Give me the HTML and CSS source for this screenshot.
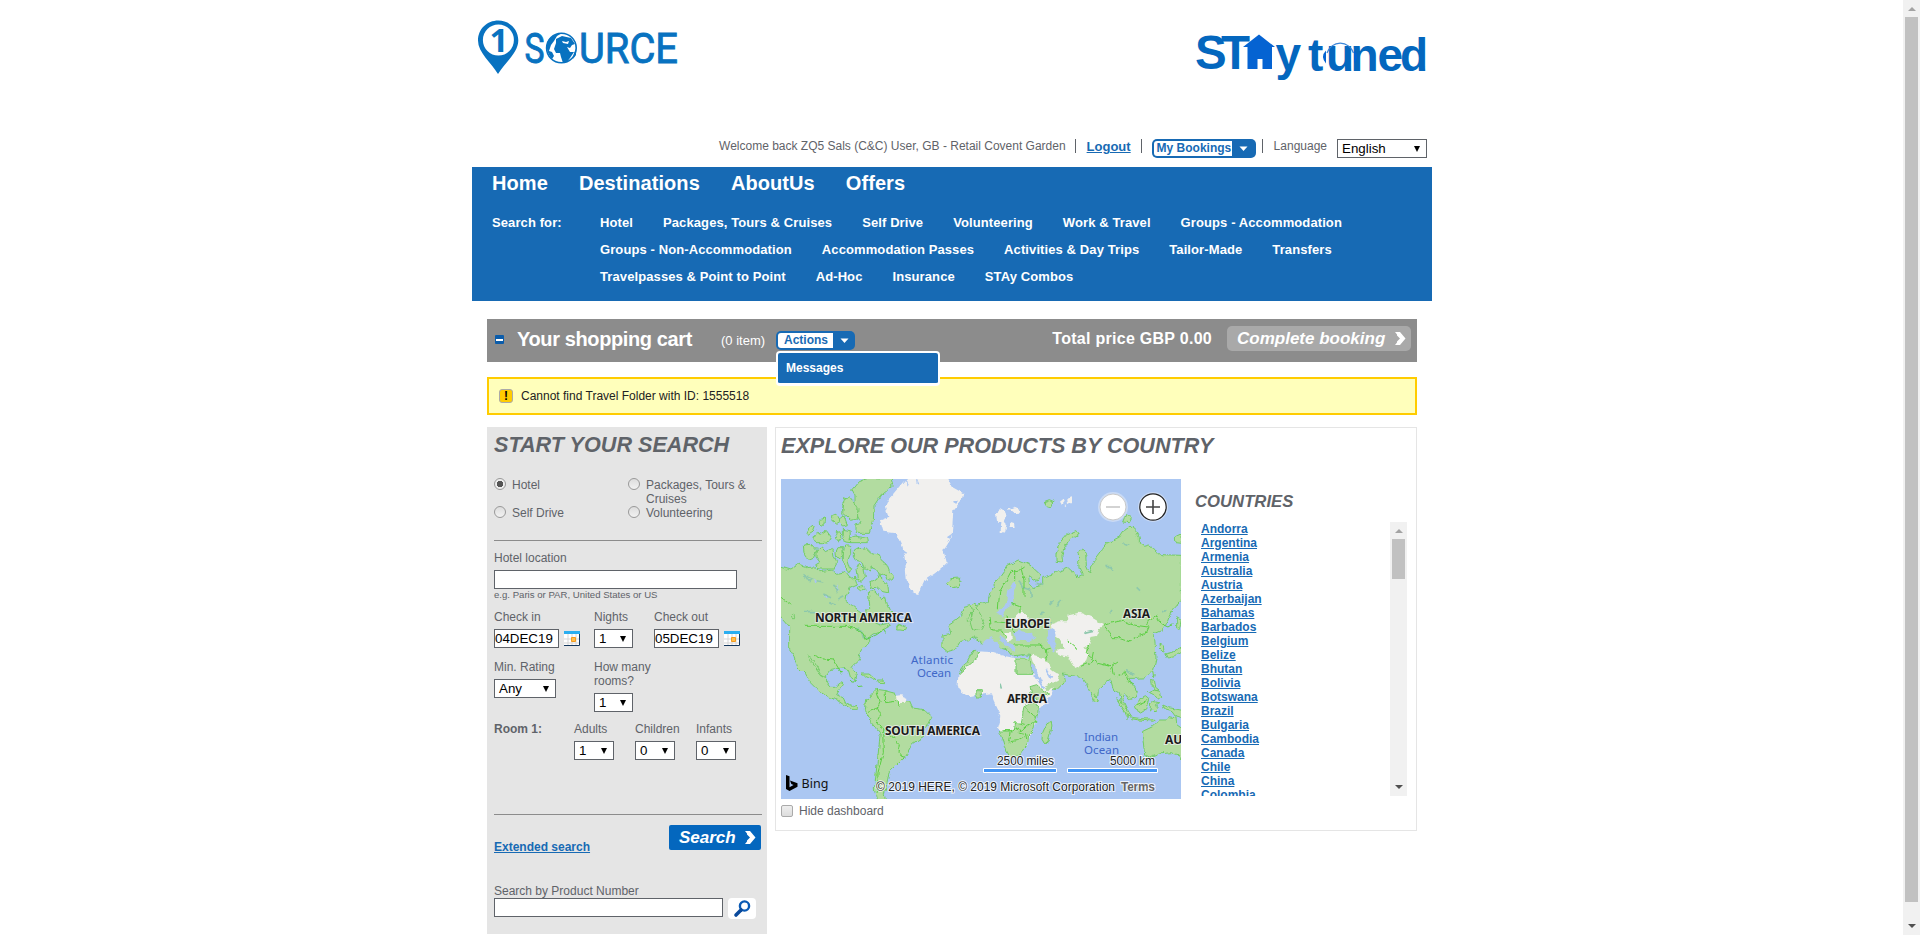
FILE: index.html
```html
<!DOCTYPE html>
<html lang="en">
<head>
<meta charset="utf-8">
<title>1Source</title>
<link rel="stylesheet" href="styles.css">
</head>
<body>
<main class="page">
  <header class="logos">
    <svg class="logo-source" width="202" height="58" viewBox="0 0 202 58">
      <path d="M21.300 1.500c11 0 20 8.500 20 20 0 12-13 22-20.300 33.500C14 43.500 1 33.500 1 21.500 1 10 10 1.500 21.300 1.500z" fill="#0872c0"/>
      <circle cx="21.400" cy="21" r="15.500" fill="#fff"/>
      <text class="pin-digit" x="12.500" y="33">1</text>
      <text class="source-text" x="47.500" y="44" textLength="20" lengthAdjust="spacingAndGlyphs">S</text>
      <text class="source-text" x="102" y="44" textLength="99" lengthAdjust="spacingAndGlyphs">URCE</text>
      <circle cx="84.400" cy="29" r="14.800" fill="#fff" stroke="#0872c0" stroke-width="1.600"/>
      <path d="M79 20l6-3 9 2 4 6-3 1-2 3-3-1 3 5 4 0-4 6-3 4-4 1-2-6-1-4-4 0-2-4 2-6zM72 20l7-5 6-1-5 3-3 5-3 4-2 6 3 1 2 4-2 3c-5-6-7-13-3-20zM97 34l2-4v6l-3 4z" fill="#0872c0"/>
      <path d="M85 22l4 1 3-1-1 3-5-1z" fill="#fff"/>
    </svg>
    <svg class="logo-stay" width="232" height="52" viewBox="0 0 232 52">
      <text class="stay-text st" x="-2 24" y="35.500">ST</text>
      <path d="M46 14L62 1.500l16 12.500h-3v22h-9.500v-10h-5v10H50.500V14z" fill="#0563d2"/>
      <text class="stay-text" x="78.500" y="36.500">y</text>
      <text class="stay-text" x="111 129 153.500 180.500 203" y="38">tuned</text>
      <path d="M130 20a14 14.500 0 0 1 26.500 0" fill="none" stroke="#3c86d8" stroke-width="1.200"/>
      <path d="M129 17.500q-6 6 0 13zM157 17.500q6 6 0 13z" fill="#0563d2"/>
    </svg>
  </header>

  <div class="user-bar">
    <span class="welcome">Welcome back ZQ5 Sals (C&amp;C) User, GB - Retail Covent Garden</span>
    <i class="sep"></i>
    <a class="logout">Logout</a>
    <i class="sep"></i>
    <span class="menu-btn my-bookings"><b>My Bookings</b><svg width="10" height="6" viewBox="0 0 10 6"><path d="M.5.5h8L4.500 5z"/></svg></span>
    <i class="sep"></i>
    <span class="language">Language</span>
    <span class="select lang-select">English<i></i></span>
  </div>

  <nav class="nav">
    <div class="nav-main"><a>Home</a><a>Destinations</a><a>AboutUs</a><a>Offers</a></div>
    <div class="nav-search">
      <span class="search-for">Search for:</span>
      <div class="products">
        <div><a>Hotel</a><a>Packages, Tours &amp; Cruises</a><a>Self Drive</a><a>Volunteering</a><a>Work &amp; Travel</a><a>Groups - Accommodation</a></div>
        <div><a>Groups - Non-Accommodation</a><a>Accommodation Passes</a><a>Activities &amp; Day Trips</a><a>Tailor-Made</a><a>Transfers</a></div>
        <div><a>Travelpasses &amp; Point to Point</a><a>Ad-Hoc</a><a>Insurance</a><a>STAy Combos</a></div>
      </div>
    </div>
  </nav>

  <div class="content">
    <section class="cart">
      <i class="collapse"></i>
      <h2>Your shopping cart</h2>
      <span class="items">(0 item)</span>
      <div class="actions">
        <span class="menu-btn"><b>Actions</b><svg width="10" height="6" viewBox="0 0 10 6"><path d="M.5.5h8L4.500 5z"/></svg></span>
        <div class="dropdown">Messages</div>
      </div>
      <span class="total">Total price GBP 0.00</span>
      <span class="go-btn complete">Complete booking<svg width="12" height="15" viewBox="0 0 12 15"><path d="M1 1h5l5.500 6.500L6 14H1l2-2.500v-1L6 7.500 3 4.500v-1z"/></svg></span>
    </section>

    <section class="warning"><b>!</b><span>Cannot find Travel Folder with ID: 1555518</span></section>

    <div class="columns">
      <form class="search">
        <h1>START YOUR SEARCH</h1>
        <div class="radios">
          <label><i class="radio on"></i><span>Hotel</span></label>
          <label><i class="radio"></i><span>Packages, Tours &amp; Cruises</span></label>
          <label><i class="radio"></i><span>Self Drive</span></label>
          <label><i class="radio"></i><span>Volunteering</span></label>
        </div>
        <div class="location">
          <label>Hotel location</label>
          <div class="field wide"></div>
          <small>e.g. Paris or PAR, United States or US</small>
        </div>
        <div class="grid dates">
          <div><label>Check in</label><div class="date"><span class="field">04DEC19</span><svg width="16" height="15" viewBox="0 0 16 15"><path d="M0 0h16v15H0z" fill="#fff"/><path d="M0 8h16M0 12h16M4 3v12M8 3v12M12 3v12" stroke="#d5d5d5"/><path d="M0 0h16v3H0z" fill="#2aaef0"/><path d="M15.500 3v11.500H0" fill="none" stroke="#12365c"/><path d="M7.500 6.500h4v4h-4z" fill="#ffc04d" stroke="#f59a1c"/></svg></div></div>
          <div><label>Nights</label><span class="select s39">1<i></i></span></div>
          <div><label>Check out</label><div class="date"><span class="field">05DEC19</span><svg width="16" height="15" viewBox="0 0 16 15"><path d="M0 0h16v15H0z" fill="#fff"/><path d="M0 8h16M0 12h16M4 3v12M8 3v12M12 3v12" stroke="#d5d5d5"/><path d="M0 0h16v3H0z" fill="#2aaef0"/><path d="M15.500 3v11.500H0" fill="none" stroke="#12365c"/><path d="M7.500 6.500h4v4h-4z" fill="#ffc04d" stroke="#f59a1c"/></svg></div></div>
        </div>
        <div class="grid rating">
          <div><label>Min. Rating</label><span class="select s62">Any<i></i></span></div>
          <div><label>How many rooms?</label><span class="select s39">1<i></i></span></div>
        </div>
        <div class="rooms">
          <b>Room 1:</b>
          <div><label>Adults</label><span class="select">1<i></i></span></div>
          <div><label>Children</label><span class="select">0<i></i></span></div>
          <div><label>Infants</label><span class="select">0<i></i></span></div>
        </div>
        <div class="submit">
          <a>Extended search</a>
          <span class="go-btn">Search<svg width="12" height="15" viewBox="0 0 12 15"><path d="M1 1h5l5.500 6.500L6 14H1l2-2.500v-1L6 7.500 3 4.500v-1z"/></svg></span>
        </div>
        <div class="by-number">
          <label>Search by Product Number</label>
          <div><span class="field"></span><span class="lens"><svg width="28" height="21" viewBox="0 0 28 21"><circle cx="16.500" cy="8" r="4.600" fill="#fff" stroke="#0a5ab4" stroke-width="2.400"/><path d="M13 12l-5 5" stroke="#0a4a9c" stroke-width="3.600" stroke-linecap="round"/></svg></span></div>
        </div>
      </form>

      <section class="explore">
        <h1>EXPLORE OUR PRODUCTS BY COUNTRY</h1>
        <div class="explore-body">
          <div class="map-col">
            <svg class="map" width="400" height="320" viewBox="0 0 400 320">
              <defs>
                <filter id="coast" x="0" y="0" width="100%" height="100%"><feTurbulence type="fractalNoise" baseFrequency=".14" numOctaves="3" seed="4"/><feDisplacementMap in="SourceGraphic" scale="5" xChannelSelector="R" yChannelSelector="G"/></filter>
              </defs>
              <path d="M0 0h400v320H0z" fill="#abc7f2"/>
              <g filter="url(#coast)">
              <path d="M-20-20h440v360H-20z" fill="#abc7f2"/>
              <!-- Americas and Greenland -->
              <g transform="translate(-11 -9) scale(.33333)">
                <g class="land">
                  <path d="M20 288l40 12 25-17 25 7 20-2 20 17 35-5 15 10 25-5 15 20 15-3 7 23-22 10-10 20-2 20 20 12 18 14 12 8 5 22 8-10-4-18 12-14-4-45 20-2 18 24 10-8 6 22 10 22 8 8-8 12-22 14-20 6 14 6 18-4 6-4 12 4-22 12-18 12-18 4-10 8 0 18-25 24-10 30-18 17 14 28-4 16-14-12-6-21-20-6-32 4-14 18 0 22 10 14 18 0 18-14 4 6-12 16-8 14 20 10 8 18 20 8 10-4 4 12-18 0-22-14-22-15-25-7-30-20-25-25-14-24-24-24-10-30-13-22V470l-30-34-10-22-37-30z"/>
                  <path d="M110 555l14 8 18 28 12 22 10 8-14-8-16-22-14-18z"/>
                  <path d="M290 688l28-30 27 4 30 8 16 24 28 2 8 18 38 5 20 20-18 36-6 24-34 22-20 36-15 14-20 20-15 14-6 36-8 30 4 26h-26l-8-40 10-90 8-80-27-32-18-34z"/>
                  <path d="M245 60l20-25 35-12 65 2 6 20-36 30-23 35-2 40-12 40h-43l0-25 20-5-15-30-22-10-20 0 2-40 20 8 0 20 15 0 0-30z"/>
                  <path d="M218 130l4-40 16-10 14 16 12 20-2 30-20 5z"/>
                  <path d="M108 190l12-22 16 2-6 16-16 10zM150 148l14-4-2 18-10 4zM185 136l12-4 14 22-10 6-16-12zM208 150l14-12 10 26-12 4zM132 205l8-18 14 6 16-10 12 16-6 18-18 4-16 0zM196 206l6-22 12 4 2 22-12 6zM220 178l20 4 2 36-16-2-6-20zM240 206l12-8 38 6 2 14-50 0zM100 225l24-2 16 18-10 24-14 6-14-20zM138 245l16-14 12 14 22-10 4 22 8 18-6 22-26 0-22 0-10-12 14-8-12-16zM198 245l6-12 14 0 2 20-10 16-10-8zM220 250l4-22 18 0 0 22-8 20 8 26-6 14-16-36zM250 260l0-20 14-8 14 6 14-4 14 14 22 6 8 18 14 12 8 20 12 14-6 16-14-6-4-16-18 6-8-22-20-8 2 18-18-10-10-22-18-4z"/>
                  <path d="M258 300l10-20 14 14 4 26-12 14-12-8zM300 340l18-10 6-14 14 12 16 20 2 20-20-4-10-10-20 2zM262 352l16-6 10 10-14 6zM380 480l2-18 8 2 18 8-4 10-14-2zM530 338l12-12 26-2 8 14-12 14-16 4zM270 612l30 0 18 14-10 2-20-10-16 0zM322 630l20 0 2 8-18-1zM64 434l8-2 2 14-8 0z"/>
                </g>
                <g class="bare">
                  <path d="M350 95l25-30 25-30 20-12h110l15 27 35 20-5 20-25 30-5 80-25 40 10 40-35 30-30 20-20 45-20-5-15-40-5-60-10-50-15-30-40-5-10-35 25-10-10-30z"/>
                  <path d="M375 678l18-2 20 8-4 14-30 2z"/>
                </g>
                <path class="water" d="M130 320l12 16-6 2zM160 372l18 6-14 4zM200 340l12 20-8 2zM350 55l20 20-4 4zM410 20l6 26-4 0zM440 20l8 20-5 0zM548 190l-18 12 10 4zM545 225l-22 8 14 6zM395 240l14 8-10 4zM565 90l-20 8 10 6z"/>
                <path class="lakes" d="M105 316l22 8-10 10zM140 335l20 4M160 372l20 8M190 345l16 12-8 14M205 390l18-10M180 398l14 6M210 425l8 18M255 475l22 6 6 22 16 4M105 425h30"/>
                <path class="border" d="M105 469h125l30 8 22 10 6 22 34-16 20-16 6 14M33 385l30 22M135 556l20 10 35 4 25 40M237 632l12 8 14-12M262 650l16-2M318 658l12 36-8 20-28 10M345 662l2 36 30-4 16 12M322 714l10 20-12 20 18 24 30 20 20 24-4 22 18 20M338 778l2 70-16 60-2 60M385 854l22 10"/>
              </g>
              <!-- Europe, Asia, Africa and Australia -->
              <g transform="translate(199 -9) scale(.33333)">
                <g class="land">
                  <path d="M25 395l5-30 30-45 25-35 30-15 35 15 32 30-8 18-28-16 2 26 12 10 28-8 0-22 42-16 35-16 20 18 10 14 12-6-10-26-2-38 10-16 12 10 2 40 10 22 16-40 22-30 14-20 38-18 17-25 14-8 18 16 10 18 0 18 16 12 14-4 22 12 14 14 60 2v135l-28 32-10 30-20 26-24 10 4 38 2 40-8 34-22 22-32 2-20 0 14 22 12 18-6 16-18 8-12-18-8 16 18 40-2 22-18-46-8-36-16-6-10-34-12 8-22 26-4 34-14-2-20-50-14-20-28-6-28-5 6 18-18 22-44 16-24-42-14-42-14-14 10-14-26-2-30 4-14-18-28-8-14 12-10 18-16-24-16-28-20-12-16 12-22 6-14 22-24 6-16-12 0-34 24-4-6-26 18-14 20-16 10-26z"/>
                  <path d="M-22 480l-8-28 8-22-4-20 10-14 6 18 14 24 8 22-8 18-24 6zM-38 442l12-14 2 20-14 6z"/>
                  <path d="M228 250l10-30 22-26 32-14 4 12-30 20-14 24-6 20 2 20-20-2zM192 95l16-6 14 6-10 16-14-4zM428 156l10-24 16 14-6 12zM586 200l20-10v30l-18-2z"/>
                  <path d="M188 788l12-26 14-8 2 16-12 44-10 8-8-14zM344 672l8 4-4 8zM410 686l16 10 20 30 10 14-14-6-18-26zM455 742l30 4 40 2-2 6-46-4-22-4zM466 706l10-14 20-12 10 8-8 28-16 10-14-8zM512 700l8-6 16 4-10 6 8 8-6 14-10-10-8 8zM515 630l8 0 4 22 10 8-10 2-10-12zM505 668l16-8 20 4 4 16-12 8-10-14zM548 705l20 8 38 8v24l-20-6-10-14-22-6zM540 520l10 4 2 24-10-8zM556 552l30-8 20-12v14l-22 14-22 4zM590 440l14 8-6 30-8-4zM518 600l6 8-4 12z"/>
                  <path d="M488 798l0-14 30-14 20-20 22 0 10-10 18 4 2 20 14 10 10-20 20 30v90l-26 0-14-20-20-6-36 4-30 12-14-8z"/>
                </g>
                <g class="bare">
                  <path d="M-67 645l2-30 25-35 30-35 40-8 30 18 46 10 40-2 12 27 20 40 22 34 22-12-12 32-36 36-6 48-18 28-6 26-24 27-32 3-20-43-14-35 10-34-22-46-10-24-28 4-36 8-32-22z"/>
                  <path d="M155 556l40 10 20 36 22 14-4 16-42 20-20-44z"/>
                  <path d="M212 462l24-8 28 0 2-18 34-8 34 14 38 22-14 10-10 24-22 4 10 18-24 14 12 20-8 24-30 16-20-34-30-6-6-14 26-8-16-20-22-14z"/>
                  <path d="M110 434l16-14 10 14 16 20-14 18-34-6zM48 130l16-14 10 8 6 12 -6 16 6 14-6 22-12-4 2-28-12 0zM84 118l20-8 14 6-4 12-16 2zM90 158l12 4 2 12-12 0zM240 92l10-8 4 8-8 10zM262 86l14-4 0 14-12 6zM254 104l8 0-6 8zM76 488l16-2 4 24-10 4-10-12z"/>
                </g>
                <g class="land">
                  <path d="M108 567h42l8 46h-50zM-65 612l24-34 20-36 16-2 0 22-22 16-20 18zM-12 662l16 0v22l-16 0zM150 650l20-6 16 14 20 14-30 20-20-10zM132 710l24-10 20 4-4 34-6 20-4 20-16 14-2 24-24 38-32 4-16-30-14-45h40l6-24 20 0z"/>
                </g>
                <path class="water" d="M50 430l20 10 12-26 18-12-2-26 10-28 0-12-10 2-14 26-6 34-8 16zM100 488l18-12 10 8 24 4 14 18-12 8-48-2zM205 482l14-8 8 24-6 18 10 22-10 8-14-26zM60 494l16 14 14 14 14 12-4 10-20-16-22-18zM10 518l24-20 18 22 24 32-40-6-50-2zM196 596l8 4 16 20-8 4zM155 580l10 12 28 60-8 0-30-50z"/>
                <path class="lakes" d="M430 218l18 8M376 290l16 0 10 12M470 352l10 10M316 490l26-6M170 340l20 6M120 335l6 16 26 10 2 22M180 430l14-4M212 402l10-10M230 410l12-20M210 440v20M390 430l6-10M60 640l4 16M548 426l14-6M440 600l20 16"/>
                <path class="border" d="M55 415l4-50 22-38 14-26 16 4 20-14M104 300l0 32M122 290l10 40 0 50M30 440l4 40 34 0 12 22M44 455l42 4 18 30M80 440l16 20M90 400l30 10 0 20M370 467l22-8 38-8 30 14 44 6-10 22-20 6-24 14-30-10-24 0-10-16zM500 465l4-14 24-14 14 24 22 10 16-10M330 520l-12 30 36 30 40 10 20-14M300 590l34-14 6-30M398 590l6 30M416 620l18-10 6 20 22 12M430 600l14 20M100 525l80 0 16 14 16-4M196 540l6 34M260 510l30 26M70 782l20 0 16-8M90 786l-4 30 26-4 24-12M116 786l20 4 4 20M106 774l20 8 16-14 30-12M134 712l36 32M100 758l34 8M128 696l30-16M370 580l20 8 4 16M470 704l30-12"/>
              </g>
              </g>
              <g class="continent"><text x="34" y="143" textLength="97">NORTH AMERICA</text><text x="224" y="149" textLength="45">EUROPE</text><text x="342" y="139" textLength="27">ASIA</text><text x="104" y="256" textLength="95">SOUTH AMERICA</text><text x="226" y="224" textLength="40">AFRICA</text><text x="384" y="265">AU</text></g>
              <g class="ocean"><text x="130" y="185" textLength="42">Atlantic</text><text x="136" y="198" textLength="34">Ocean</text><text x="303" y="262" textLength="34">Indian</text><text x="303" y="275" textLength="35">Ocean</text></g>
              <g class="legend"><text x="216" y="286" textLength="57">2500 miles</text><text x="329" y="286" textLength="45">5000 km</text><text x="95" y="312" textLength="239">© 2019 HERE, © 2019 Microsoft Corporation</text><text class="terms" x="340" y="312" textLength="34">Terms</text></g>
              <path d="M202.500 289.500h73v4h-73zM286.500 289.500h90v4h-90z" fill="#4496f5" stroke="#fff"/>
              <path d="M5 296l3.500 1.200v11l4-2.200-2.200-1-1.300-3.500 7.500 2.800v3.500L8.500 312 5 310z"/>
              <text class="bing" x="20.500" y="309" textLength="27">Bing</text>
              <g fill="#fff"><circle cx="332" cy="28" r="15" fill="#c9daf5"/><circle cx="332" cy="28" r="13" stroke="#c8c8c8"/><circle cx="372" cy="28" r="15" fill="#c9daf5"/><circle cx="372" cy="28" r="13.200" stroke="#222" stroke-width="1.200"/></g>
              <path d="M325 28h14" stroke="#c4c4c4" stroke-width="1.500"/><path d="M365 28h14M372 21v14" stroke="#444" stroke-width="1.600"/>
            </svg>
            <label class="hide"><i></i>Hide dashboard</label>
          </div>
          <div class="countries">
            <h3>COUNTRIES</h3>
            <div class="list-box">
              <div class="list"><a>Andorra</a><a>Argentina</a><a>Armenia</a><a>Australia</a><a>Austria</a><a>Azerbaijan</a><a>Bahamas</a><a>Barbados</a><a>Belgium</a><a>Belize</a><a>Bhutan</a><a>Bolivia</a><a>Botswana</a><a>Brazil</a><a>Bulgaria</a><a>Cambodia</a><a>Canada</a><a>Chile</a><a>China</a><a>Colombia</a></div>
              <div class="scrollbar"><i class="up"></i><i class="thumb"></i><i class="down"></i></div>
            </div>
          </div>
        </div>
      </section>
    </div>
  </div>
</main>
<div class="scrollbar page-scroll"><i class="up"></i><i class="thumb"></i><i class="down"></i></div>
</body>
</html>
```

FILE: styles.css
```css
* { box-sizing: border-box; }
body { margin: 0; display: flex; height: 935px; overflow: hidden; background: #fff; font: 12px/14px "Liberation Sans", Arial, sans-serif; color: #5f6369; }
h1, h2, h3 { margin: 0; }
i { font-style: normal; }
.page { width: 960px; margin: 0 auto 0 472px; }

.logos { height: 139px; padding: 19px 3px 0 5px; display: flex; justify-content: space-between; align-items: flex-start; }
.logos svg { overflow: visible; }
.logo-stay { margin-top: 14px; }
.pin-digit { font: bold 33px "Noto Sans", sans-serif; fill: #0872c0; }
.source-text { font: 43px Roboto, sans-serif; fill: #0872c0; stroke: #0872c0; stroke-width: .9; }
.stay-text { font: bold 46px "Liberation Sans", Arial, sans-serif; fill: #0467be; }
.st { font-size: 47.500px; }

.user-bar { height: 28px; padding-right: 5px; display: flex; justify-content: flex-end; align-items: flex-start; white-space: nowrap; }
.sep { width: 1px; height: 14px; background: #5f6369; }
.welcome { margin-right: 9px; }
.logout { width: 44px; margin: 0 10px 0 11px; color: #176ab4; font-size: 13px; font-weight: bold; text-decoration: underline; line-height: 15px; }
.menu-btn { display: flex; height: 19px; padding: 2px; border-radius: 5px; background: #176ab4; color: #176ab4; align-items: center; }
.menu-btn b { height: 15px; line-height: 14px; padding: 0 5px 0 6px; background: #fff; border-radius: 3px 0 0 3px; white-space: nowrap; }
.menu-btn svg { flex: none; margin: 0 5px 0 7px; fill: #fff; }
.my-bookings { width: 104px; margin: 0 6px 0 10px; }
.my-bookings b { width: 80px; padding: 0 0 0 3px; }
.language { margin: 0 10px 0 11px; }
.select { display: flex; justify-content: space-between; align-items: center; height: 19px; padding: 0 6px 0 4px; border: 1px solid #5f6369; background: #fff; color: #000; font-size: 13.333px; line-height: 17px; }
.select i { border: 3px solid transparent; border-top: 6px solid #000; border-bottom: 0; }
.lang-select { width: 90px; }

.nav { height: 134px; padding: 5px 20px 0; background: #176ab4; color: #fff; font-weight: bold; }
.nav-main { display: flex; gap: 31px; font-size: 20px; line-height: 23px; letter-spacing: .08px; }
.nav-search { display: flex; margin-top: 14px; font-size: 13px; line-height: 27px; letter-spacing: .1px; }
.search-for { width: 108px; }
.products > div { display: flex; gap: 30px; white-space: nowrap; }

.content { padding: 18px 15px 0; }
.cart { display: flex; height: 43px; padding: 0 6px 0 8px; background: #8c8c8c; color: #fff; }
.collapse { width: 9px; height: 9px; margin: 16px 13px 0 0; border: solid #0b5caa; border-width: 4px 1px 3px; background: #fff; border-radius: 1px; }
.cart h2 { width: 204px; font-size: 20px; line-height: 23px; margin-top: 9px; letter-spacing: -.38px; }
.items { width: 55px; font-size: 13px; line-height: 15px; margin-top: 14px; }
.actions { position: relative; padding-top: 12px; width: 79px; }
.dropdown { position: absolute; left: 0; top: 32px; width: 164px; height: 35px; padding-left: 8px; border: 2px solid #fff; border-bottom-width: 3px; border-radius: 4px; background: #176ab4; font-weight: bold; line-height: 30px; z-index: 2; }
.total { margin: 10px 15px 0 auto; font-size: 16px; line-height: 20px; font-weight: bold; letter-spacing: .28px; }
.go-btn { display: flex; justify-content: space-between; align-items: center; width: 92px; height: 25px; padding: 0 5px 0 10px; border-radius: 2px; background: #0467be; color: #fff; font: italic bold 17px/25px "Liberation Sans", Arial, sans-serif; }
.go-btn svg { fill: #fff; }
.complete { width: 184px; margin-top: 7px; border-radius: 5px; background: #a9a9a9; }

.warning { display: flex; align-items: center; height: 38px; margin: 15px 0 12px; padding: 0 10px; border: 2px solid #fc0; background: #ffffbb; color: #222; }
.warning b { width: 14px; height: 14px; margin-right: 8px; border: 1px solid #aaa; border-radius: 3px; background: #fc0; color: #000; text-align: center; line-height: 12px; }

.columns { display: flex; gap: 8px; align-items: flex-start; }
h1 { font: italic bold 21.600px/24px "Liberation Sans", Arial, sans-serif; white-space: nowrap; }
.search { width: 280px; height: 507px; padding: 6px 5px 0 7px; background: #e5e5e5; }
.radios { display: grid; grid-template-columns: 134px 120px; grid-auto-rows: 28px; height: 63px; margin-top: 21px; border-bottom: 1px solid #8c8c8c; }
.radios label { display: flex; gap: 6px; }
.radio { flex: none; width: 12px; height: 12px; border: 1px solid #999; border-radius: 50%; background: linear-gradient(#ddd, #f2f2f2); }
.on { background: radial-gradient(circle, #555 0 3px, #eee 3.500px); }
.location { padding-top: 10px; height: 69px; }
.location label, .grid label, .rooms label, .by-number label { display: block; }
.field { display: block; width: 65px; height: 19px; border: 1px solid #5f6369; background: #fff; color: #000; font-size: 13.333px; line-height: 17px; }
.wide { width: 243px; margin-top: 5px; }
small { display: block; font-size: 9.600px; line-height: 12px; }
.grid { display: grid; grid-template-columns: 100px 60px auto; }
.grid .select, .rooms .select, .date { margin-top: 5px; }
.date { display: flex; gap: 5px; align-items: center; }
.dates { height: 50px; }
.rating { height: 62px; }
.s39 { width: 39px; }
.s62 { width: 62px; }
.rooms { display: grid; grid-template-columns: 80px 61px 61px 61px; height: 93px; border-bottom: 1px solid #8c8c8c; }
.rooms .select { width: 40px; }
.submit { display: flex; justify-content: space-between; height: 69px; padding: 10px 1px 0 0; }
.submit a { margin-top: 15px; height: 14px; color: #176ab4; font-weight: bold; text-decoration: underline; white-space: nowrap; }
.by-number > div { display: flex; gap: 5px; }
.by-number .field { width: 229px; }
.lens { height: 21px; border-radius: 4px; background: #fff; }

.explore { width: 642px; height: 404px; padding: 6px 5px 2px; border: 1px solid #e5e5e5; }
.explore-body { display: flex; margin-top: 21px; }
.map { display: block; }
.land { fill: #b2dca0; stroke: #72cd65; stroke-width: 3; }
.bare { fill: #f1f0ee; }
.water { fill: #abc7f2; }
.lakes { fill: none; stroke: #8dc8ac; stroke-width: 5; }
.border { fill: none; stroke: #5bcf42; stroke-width: 3; }
.continent { font: bold 12px "Noto Sans", sans-serif; fill: #1c1c1c; stroke: #eeec; stroke-width: 2; paint-order: stroke; }
.ocean { font: 11.500px "Noto Sans", sans-serif; fill: #4067c8; }
.legend { font: 12px "Liberation Sans", Arial, sans-serif; fill: #222; stroke: #fffc; stroke-width: 2; paint-order: stroke; }
.terms { font-weight: bold; fill: #666; }
.bing { font: 12.500px "Noto Sans", sans-serif; fill: #111; }
.hide { display: flex; align-items: center; gap: 6px; margin-top: 5px; }
.hide i { width: 12px; height: 12px; border: 1px solid #aaa; border-radius: 2px; background: linear-gradient(#eee, #ddd); }
.countries { padding: 14px 0 0 14px; }
h3 { font: italic bold 16.700px/18px "Liberation Sans", Arial, sans-serif; }
.list-box { display: flex; justify-content: space-between; width: 212px; height: 274px; margin-top: 11px; overflow: hidden; }
.list { padding-left: 6px; }
.list a { display: block; color: #176ab4; font-weight: bold; text-decoration: underline; }
.scrollbar { display: flex; flex-direction: column; align-items: center; width: 17px; background: #f1f1f1; }
.up { margin: 7px 0 6px; border: 4px solid transparent; border-top: 0; border-bottom-color: #a3a3a3; }
.thumb { width: 13px; height: 40px; background: #c1c1c1; }
.down { margin: auto 0 7px; border: 4px solid transparent; border-bottom: 0; border-top-color: #505050; }
.page-scroll .thumb { height: 885px; }
```
